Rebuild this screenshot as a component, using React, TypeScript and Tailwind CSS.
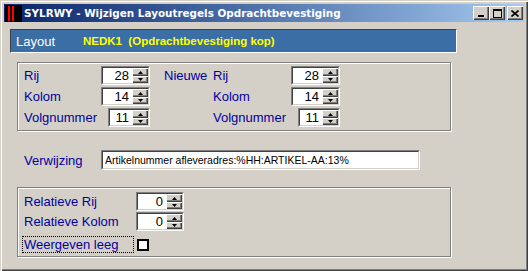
import React from 'react';

const FONT = "font-['Liberation_Sans',Arial,sans-serif]";
const LABEL = 'text-[13px] leading-[15px] text-[#0000a0]';

const Raised = ({ children, className = '' }: { children?: React.ReactNode; className?: string }) => (
  <div
    className={`bg-[#d4d0c8] shadow-[inset_1px_1px_0_#ffffff,inset_-1px_-1px_0_#404040,inset_-2px_-2px_0_#808080] flex items-center justify-center ${className}`}
  >
    {children}
  </div>
);

const Arrow = ({ up }: { up?: boolean }) => (
  <svg width="5" height="3" viewBox="0 0 5 3">
    {up ? <polygon points="2.5,0 5,3 0,3" fill="#000" /> : <polygon points="0,0 5,0 2.5,3" fill="#000" />}
  </svg>
);

const Sunken = ({ children, className = '' }: { children?: React.ReactNode; className?: string }) => (
  <div className={`border border-t-[#808080] border-l-[#808080] border-r-white border-b-white ${className}`}>
    <div className="w-full h-full border border-t-[#404040] border-l-[#404040] border-r-[#d4d0c8] border-b-[#d4d0c8] bg-white flex">
      {children}
    </div>
  </div>
);

const Spin = ({ value, w }: { value: string; w: string }) => (
  <Sunken className={`h-[19px] ${w}`}>
    <div className="flex-1 text-right pr-[3px] text-[13px] leading-[15px] text-black">{value}</div>
    <div className="flex flex-col w-[16px] h-full">
      <Raised className="h-[8px]">
        <Arrow up />
      </Raised>
      <Raised className="h-[7px]">
        <Arrow />
      </Raised>
    </div>
  </Sunken>
);

const TitleButton = ({ kind }: { kind: 'min' | 'max' | 'close' }) => (
  <Raised className="w-[16px] h-[14px]">
    {kind === 'min' && (
      <svg width="8" height="8" viewBox="0 0 8 8">
        <rect x="1" y="6" width="6" height="2" fill="#000" />
      </svg>
    )}
    {kind === 'max' && (
      <svg width="9" height="9" viewBox="0 0 9 9">
        <rect x="0.5" y="0.5" width="8" height="8" fill="none" stroke="#000" />
        <rect x="0" y="0" width="9" height="2" fill="#000" />
      </svg>
    )}
    {kind === 'close' && (
      <svg width="8" height="7" viewBox="0 0 8 7">
        <path d="M0.5 0.5 L7.5 6.5 M7.5 0.5 L0.5 6.5" stroke="#000" strokeWidth="1.6" />
      </svg>
    )}
  </Raised>
);

const GroupBox = ({ children, className = '' }: { children?: React.ReactNode; className?: string }) => (
  <div className={`border border-[#808080] shadow-[inset_1px_1px_0_#ffffff,1px_1px_0_#ffffff] ${className}`}>
    {children}
  </div>
);

export default function App() {
  return (
    <div
      className={`${FONT} w-[528px] h-[271px] bg-[#d4d0c8] p-[4px] shadow-[inset_1px_1px_0_#d4d0c8,inset_2px_2px_0_#ffffff,inset_-1px_-1px_0_#404040,inset_-2px_-2px_0_#808080] flex flex-col`}
    >
      {/* title bar */}
      <div className="h-[18px] flex items-center bg-gradient-to-r from-[#0a246a] to-[#a6caf0] pr-[1px]">
        <div className="w-[17px] h-[17px] ml-[1px] bg-black flex gap-[2px] pl-[3px] pt-[1px]">
          <div className="w-[2px] h-[15px] bg-[#ff0000]" />
          <div className="w-[2px] h-[15px] bg-[#ff0000]" />
        </div>
        <div className="ml-[2px] text-white font-bold font-['DejaVu_Sans',Verdana,sans-serif] text-[10.4px] leading-[14px] whitespace-nowrap">
          SYLRWY - Wijzigen Layoutregels Opdrachtbevestiging
        </div>
        <div className="ml-auto flex items-center">
          <TitleButton kind="min" />
          <TitleButton kind="max" />
          <div className="ml-[2px]">
            <TitleButton kind="close" />
          </div>
        </div>
      </div>

      {/* layout bar */}
      <div className="mt-[7px] ml-[6px] w-[447px] h-[24px] bg-[#3a6ea5] border border-t-[#404040] border-l-[#404040] border-r-white border-b-white flex items-center pl-[5px]">
        <span className="w-[67px] text-white text-[13px] leading-[15px]">Layout</span>
        <span className="text-[#ffff00] font-bold text-[11.5px] leading-[15px] whitespace-pre">
          NEDK1  (Opdrachtbevestiging kop)
        </span>
      </div>

      {/* group 1 */}
      <GroupBox className="mt-[9px] ml-[13px] w-[434px] h-[69px] pt-[3px] pl-[6px] flex flex-col gap-[2px]">
        {[
          ['Rij', '28', 'w-[49px]', true],
          ['Kolom', '14', 'w-[49px]', false],
          ['Volgnummer', '11', 'w-[42px]', false],
        ].map(([label, value, w, first]) => (
          <div key={label as string} className="flex items-center h-[19px]">
            <span className={`${LABEL} w-[77px]`}>{label as string}</span>
            <div className="w-[49px] flex justify-end">
              <Spin value={value as string} w={w as string} />
            </div>
            <span className={`${LABEL} ml-[14px] w-[49px]`}>{first ? 'Nieuwe' : ''}</span>
            <span className={`${LABEL} w-[78px]`}>{label as string}</span>
            <div className="w-[49px] flex justify-end">
              <Spin value={value as string} w={w as string} />
            </div>
          </div>
        ))}
      </GroupBox>

      {/* verwijzing */}
      <div className="mt-[19px] ml-[20px] flex items-center">
        <span className={`${LABEL} w-[77px]`}>Verwijzing</span>
        <Sunken className="w-[319px] h-[20px]">
          <div className="pl-[2px] text-black text-[10.5px] leading-[16px] whitespace-nowrap">
            Artikelnummer afleveradres:%HH:ARTIKEL-AA:13%
          </div>
        </Sunken>
      </div>

      {/* group 2 */}
      <GroupBox className="mt-[17px] ml-[13px] w-[434px] h-[70px] pt-[4px] pl-[6px] flex flex-col gap-[1px]">
        <div className="flex items-center h-[19px]">
          <span className={`${LABEL} w-[112px]`}>Relatieve Rij</span>
          <Spin value="0" w="w-[48px]" />
        </div>
        <div className="flex items-center h-[19px]">
          <span className={`${LABEL} w-[112px]`}>Relatieve Kolom</span>
          <Spin value="0" w="w-[48px]" />
        </div>
        <div className="flex items-center h-[17px] mt-[4px] -ml-[2px]">
          <span className={`${LABEL} w-[112px] h-[17px] border border-dotted border-black pl-[1px]`}>
            Weergeven leeg
          </span>
          <div className="ml-[3px] w-[12px] h-[12px] border-2 border-black bg-white" />
        </div>
      </GroupBox>
    </div>
  );
}
